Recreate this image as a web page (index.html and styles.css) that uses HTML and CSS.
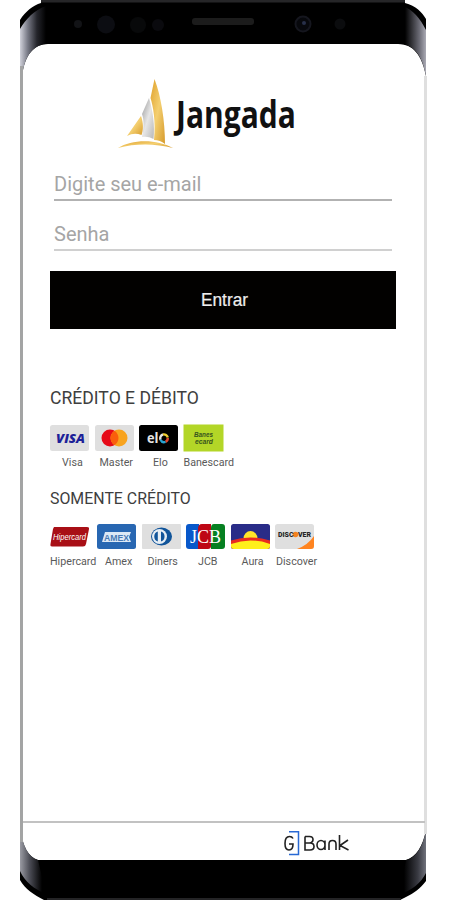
FILE: index.html
```html
<!DOCTYPE html>
<html lang="pt-BR">
<head>
<meta charset="utf-8">
<title>Jangada</title>
<link rel="stylesheet" href="styles.css">
</head>
<body>
<div class="phone">
  <svg class="frame" viewBox="0 0 450 900" aria-hidden="true">
    <defs>
      <linearGradient id="tl" x1="20" x2="46" y1="0" y2="0" gradientUnits="userSpaceOnUse"><stop offset="0" stop-color="#d0d1da"/><stop offset=".3" stop-color="#777985"/><stop offset=".65" stop-color="#24252b"/><stop offset="1" stop-color="#000"/></linearGradient>
      <linearGradient id="tr" x1="427" x2="405" y1="0" y2="0" gradientUnits="userSpaceOnUse"><stop offset="0" stop-color="#b4b4be"/><stop offset=".35" stop-color="#6b6b75"/><stop offset="1" stop-color="#000"/></linearGradient>
      <linearGradient id="bl" x1="20" x2="42" y1="0" y2="0" gradientUnits="userSpaceOnUse"><stop offset="0" stop-color="#9a9ba3"/><stop offset=".45" stop-color="#4a4b54"/><stop offset="1" stop-color="#000"/></linearGradient>
      <linearGradient id="br" x1="427" x2="404" y1="0" y2="0" gradientUnits="userSpaceOnUse"><stop offset="0" stop-color="#777983"/><stop offset=".4" stop-color="#393a42"/><stop offset="1" stop-color="#000"/></linearGradient>
    </defs>
    <path d="M41 0H405V3C416 6 422 12 426 19V76C422 55 413 44 398 44H48C34 44 24 55 22 78L20 76V20C25 12 33 5 41 3Z" fill="#000"/>
    <path d="M41 0H405V2.500H41Z" fill="#262628"/>
    <path d="M20 29C26 19 34 10 46 6L46 44C34 45 24 55 22 78L20 76Z" fill="url(#tl)"/>
    <path d="M426 30C420 18 413 10 403 6L401 44C414 45 422 55 426 76Z" fill="url(#tr)"/>
    <path d="M20 830C23 846 28 857 38 860H406C416 857 423 846 426 830V881C420 889 414 893 406 897L400 900H44C34 895 25 889 20 880Z" fill="#000"/>
    <path d="M20 828C23 846 28 857 38 860L46 894C34 889 25 882 20 871Z" fill="url(#bl)"/>
    <path d="M426 828C424 846 416 858 406 860L399 895C412 890 421 883 426 873Z" fill="url(#br)"/>
    <path d="M47 899H401" stroke="#242426" stroke-width="2"/>
    <path d="M21.500 66V842" stroke="#a3a4a4" stroke-width="3"/>
    <path d="M425.500 76V834" stroke="#dfdfdf" stroke-width="3"/>
    <circle cx="78" cy="24" r="4" fill="#121316"/><circle cx="106" cy="24.500" r="9" fill="#0c0d12"/><circle cx="138" cy="25" r="8" fill="#08090a"/><circle cx="158" cy="25" r="6" fill="#0a0a0e"/>
    <rect x="192" y="18" width="62" height="7" rx="3" fill="#1c1c1c"/>
    <circle cx="303" cy="24" r="7.500" fill="#07080c" stroke="#15161e" stroke-width="2"/><circle cx="304" cy="23" r="2" fill="#28304a"/><circle cx="340" cy="24" r="5.500" fill="#0b0c0e"/>
  </svg>
  <main class="screen">
    <header class="brand">
      <svg class="sail" viewBox="0 0 56 72" aria-hidden="true">
        <defs><linearGradient id="gold" x2="1" y2="1"><stop offset="0" stop-color="#dfa02b"/><stop offset=".5" stop-color="#f4cf70"/><stop offset="1" stop-color="#d69a2b"/></linearGradient>
        <linearGradient id="silver" x2="1" y2="1"><stop offset="0" stop-color="#999"/><stop offset=".5" stop-color="#e6e6e6"/><stop offset="1" stop-color="#b8b8b8"/></linearGradient></defs>
        <path d="M36.500 1C43 18 47 43 47 66Q42 62 36 62C38 43 35 28 32.500 20Z" fill="url(#gold)"/>
        <path d="M31 20C35 33 37 48 35.500 61Q30 58 24 59C26 48 26 42 24 36Z" fill="url(#silver)"/>
        <path d="M23 38C25.500 45 25.500 52 23.500 57Q16 54 9 58Z" fill="url(#gold)"/>
        <path d="M0 70C14 61 39 61 55 70C38 65.500 18 65 0 70Z" fill="url(#gold)"/>
      </svg>
      <h1 class="brand-name"><span>Jangada</span></h1>
    </header>
    <form class="login">
      <div class="field field-mail">Digite seu e-mail</div>
      <div class="field field-pass">Senha</div>
      <button class="enter" type="button"><span>Entrar</span></button>
    </form>
    <h2 class="title title-debit">CRÉDITO E DÉBITO</h2>
    <ul class="cards">
      <li><svg class="card" viewBox="0 0 39 26"><rect width="39" height="26" rx="2.500" fill="#dfdfdf"/><text x="6" y="17.500" class="visa" textLength="29" lengthAdjust="spacingAndGlyphs">VISA</text></svg><span class="lab l-visa">Visa</span></li>
      <li><svg class="card" viewBox="0 0 39 26"><rect width="39" height="26" rx="2.500" fill="#dfdfdf"/><circle cx="15" cy="13" r="8.500" fill="#e60a18"/><circle cx="24" cy="13" r="8.500" fill="#f8a31e"/><path d="M19.500 5.800a8.500 8.500 0 0 1 0 14.400a8.500 8.500 0 0 1 0-14.400" fill="#fa5e0c"/></svg><span class="lab l-master">Master</span></li>
      <li><svg class="card" viewBox="0 0 39 26"><rect width="39" height="26" rx="2.500" fill="#000"/><text x="8" y="17.500" class="elo" textLength="11.500" lengthAdjust="spacingAndGlyphs">el</text><g fill="none" stroke-width="2.400"><path d="M21.500 14.800A4 4 0 0 1 24 9.500" stroke="#e5e5e5"/><path d="M24 9.500A4 4 0 0 1 28.800 12.500" stroke="#f0cf32"/><path d="M28.800 13A4 4 0 0 1 26.500 16.800" stroke="#e0442e"/><path d="M26.500 16.800A4 4 0 0 1 21.500 14.800" stroke="#28a3d0"/></g></svg><span class="lab l-elo">Elo</span></li>
      <li><svg class="card" viewBox="0 0 39 26"><path d="M-.5-.5h40v27h-40z" fill="#b3d627"/><text x="10" y="12.200" class="banes" textLength="19" lengthAdjust="spacingAndGlyphs">Banes</text><text x="11" y="18.800" class="banes" textLength="18" lengthAdjust="spacingAndGlyphs">ecard</text></svg><span class="lab l-banes">Banescard</span></li>
    </ul>
    <h2 class="title title-credit">SOMENTE CRÉDITO</h2>
    <ul class="cards cards-credit">
      <li><svg class="card" viewBox="0 0 39 26"><path d="M4 3H37Q39.500 3 39 5L36 20Q35.500 22.500 33 22.500H2Q0 22.500.5 20L3 5Z" fill="#a80f16"/><text x="3" y="15.800" class="hiper" textLength="33" lengthAdjust="spacingAndGlyphs">Hipercard</text></svg><span class="lab l-hiper">Hipercard</span></li>
      <li><svg class="card" viewBox="0 0 39 26"><rect width="39" height="25" rx="2.500" fill="#2867b2"/><path d="M8 8H34L32 13L34 18H5Z" fill="#dce9f6"/><text x="7" y="16.500" class="amex" textLength="25" lengthAdjust="spacingAndGlyphs">AMEX</text></svg><span class="lab l-amex">Amex</span></li>
      <li><svg class="card" viewBox="0 0 39 26"><rect width="39" height="25" rx="1" fill="#dfdfdf"/><ellipse cx="19.500" cy="12.500" rx="10.500" ry="9" fill="#10549a"/><circle cx="17.500" cy="12.500" r="7.500" fill="#e5edf4"/><path d="M15.800 7.500A5.300 5.300 0 0 0 15.800 17.500ZM19 7.500A5.300 5.300 0 0 1 19 17.500Z" fill="#10549a"/></svg><span class="lab l-diners">Diners</span></li>
      <li><svg class="card" viewBox="0 0 39 26"><path d="M3 0H13V25H3Q0 25 0 22V3Q0 0 3 0Z" fill="#0858ca"/><path d="M16 0H25V22Q25 25 22 25H12V5Q12 0 16 0Z" fill="#be0715"/><path d="M28 0H36Q39 0 39 3V22Q39 25 36 25H25V4Q25 0 28 0Z" fill="#068021"/><text x="4" y="19" class="jcb" textLength="31" lengthAdjust="spacingAndGlyphs">JCB</text></svg><span class="lab l-jcb">JCB</span></li>
      <li><svg class="card" viewBox="0 0 39 26"><rect width="39" height="25" rx="2.500" fill="#292c88"/><path d="M12.500 14.500A7 7.500 0 0 1 26.500 14.500Z" fill="#ffe52a"/><path d="M0 16.500Q19.500 10.500 39 16.500V22Q39 25 36 25H3Q0 25 0 22Z" fill="#e92c20"/><path d="M0 20Q19.500 13 39 20V22Q39 25 36 25H3Q0 25 0 22Z" fill="#fff01b"/></svg><span class="lab l-aura">Aura</span></li>
      <li><svg class="card" viewBox="0 0 39 26"><rect width="39" height="25" rx="2.500" fill="#dfdfdf"/><path d="M22 25Q33 21 39 12V22Q39 25 36 25Z" fill="#ff8420"/><circle cx="20.500" cy="10.500" r="2.800" fill="#f58220"/><text x="3" y="12.800" class="disc" textLength="15.500" lengthAdjust="spacingAndGlyphs">DISC</text><text x="23" y="12.800" class="disc" textLength="13" lengthAdjust="spacingAndGlyphs">VER</text></svg><span class="lab l-disc">Discover</span></li>
    </ul>
    <footer class="bank">
      <svg class="bank-logo" viewBox="0 0 68 26" role="img" aria-label="G Bank"><g fill="none" stroke="#222" stroke-width="1.600"><path d="M10 7.500Q9 5.500 6.500 5.500Q2 5.500 2 12.500Q2 19 6 19Q10 19 10 13H6"/><path d="M22 5.500H26.500Q30 5.500 30 8.500T26.500 12H22V5.500V19H27Q31 19 31 15.500T27 12"/><path d="M42 9.500V19M42 14A4 4.500 0 1 1 34 14A4 4.500 0 0 1 42 14M46 19V13Q46 9.500 49.500 9.500T53 13V19M56.500 4V19M65 9L57 14.500L65.500 19"/></g><path d="M6 .8H15.500V23.500H6" fill="none" stroke="#2869d4" stroke-width="1.500"/></svg>
    </footer>
  </main>
</div>
</body>
</html>
```
FILE: styles.css
```css
* { box-sizing: border-box; }
body { margin: 0; background: #fff; font-family: Roboto, "Liberation Sans", sans-serif; }
.phone { position: relative; width: 450px; height: 900px; overflow: hidden; }
.frame { position: absolute; inset: 0; width: 450px; height: 900px; }
.screen { position: relative; display: flex; flex-direction: column; width: 402px; height: 860px; margin-left: 23px; padding-top: 78px; }
.brand { display: flex; height: 72px; padding-left: 95px; }
.sail { width: 56px; height: 72px; flex: none; }
.brand-name { margin: 13px 0 0 2px; font: 700 37px/46px "Open Sans", "Noto Sans", sans-serif; color: #111; }
.brand-name span { display: inline-block; transform: scaleX(.81); transform-origin: left; }
.login { display: flex; flex-direction: column; margin: 0; padding: 0 29px 0 27px; }
.field { margin: 0 4px; color: #a5a5a5; font-size: 20px; line-height: 24px; }
.field-mail { margin-top: 22px; height: 29px; border-bottom: 2px solid #b2b2b2; }
.field-pass { margin-top: 21px; height: 29px; border-bottom: 2px solid #d0d0d0; }
.enter { margin-top: 20px; height: 58px; border: 0; padding: 0; background: #020100; color: #eee; font: 18px/58px "Liberation Sans", sans-serif; }
.enter span { display: inline-block; transform: translateX(2px) scaleX(.96); -webkit-text-stroke: .2px #eee; }
.title { margin: 0 0 0 27px; font-weight: 400; color: #3e3e3e; white-space: nowrap; }
.title-debit { margin-top: 57px; font-size: 17.6px; line-height: 24px; }
.title-credit { margin-top: 16px; font-size: 15.9px; line-height: 24px; }
.cards { display: flex; gap: 5.5px; list-style: none; margin: 15px 0 0 27px; padding: 0; height: 46px; }
.cards li { width: 39px; flex: none; display: flex; flex-direction: column; align-items: flex-start; }
.card { width: 39px; height: 26px; flex: none; overflow: visible; }
.cards-credit { margin-top: 12.5px; }
.cards-credit li:first-child { width: 41.5px; }
.lab { margin-top: 5px; font-size: 10.7px; line-height: 14px; color: #5a5a5a; white-space: nowrap; }
.l-visa { margin-left: 12px; }
.l-master { margin-left: 5px; }
.l-elo { margin-left: 14px; }
.l-amex { margin-left: 8px; }
.l-diners { margin-left: 6px; }
.l-jcb { margin-left: 12px; }
.l-aura { margin-left: 11px; }
.l-disc { margin-left: 1px; }
.visa { font: italic 800 13px "Open Sans", sans-serif; fill: #1c2198; }
.elo { font: 700 15px "Open Sans", sans-serif; fill: #e5e5e5; }
.banes { font: italic 700 7px "Liberation Sans", sans-serif; fill: #37541e; }
.hiper { font: italic 9px "Liberation Sans", sans-serif; fill: #fff; }
.amex { font: 700 9px "Liberation Sans", sans-serif; fill: #4779b5; }
.jcb { font: 18px "Liberation Serif", serif; fill: #fff; }
.disc { font: 900 6.500px Roboto, sans-serif; fill: #252525; }
.bank { margin-top: auto; height: 39px; border-top: 2px solid #c2c2c2; padding: 8px 0 0 260px; }
.bank-logo { display: block; width: 68px; height: 26px; }
```
